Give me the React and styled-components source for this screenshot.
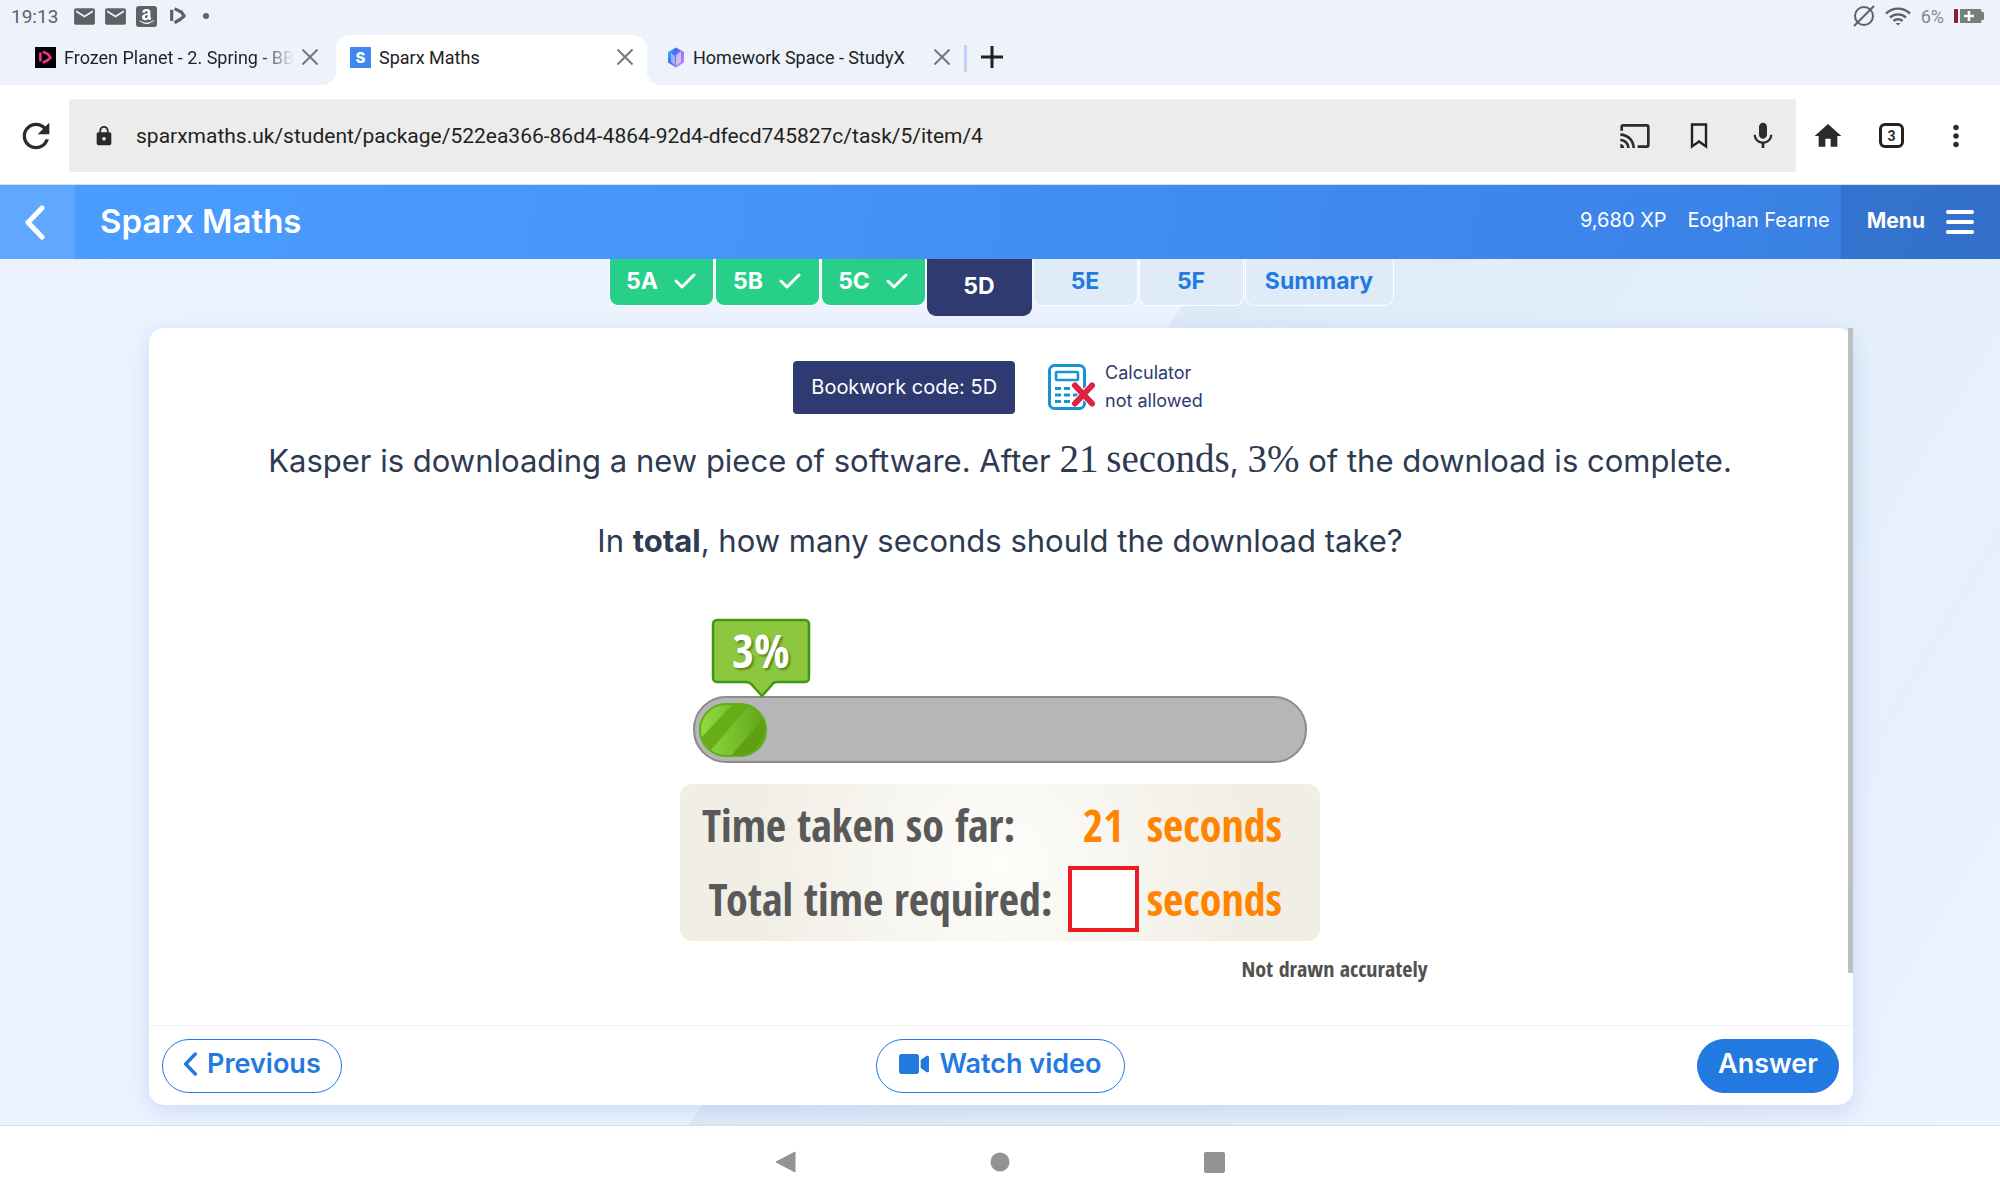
import React from 'react';
import styled, { createGlobalStyle } from 'styled-components';
import { MdEmail, MdRefresh, MdLock, MdCast, MdMic, MdHome, MdMoreVert } from 'react-icons/md';
import { FaAmazon, FaVideo } from 'react-icons/fa';

const GlobalStyle = createGlobalStyle`
  * {
    box-sizing: border-box;
  }
  body {
    margin: 0;
    background: #ffffff;
    font-family: Inter, 'Liberation Sans', sans-serif;
  }
  button, input {
    font-family: inherit;
  }
  button {
    padding: 0;
    border: none;
    background: none;
    color: inherit;
    cursor: pointer;
  }
  svg {
    display: block;
    flex: none;
  }
  p {
    margin: 0;
  }
`;

const Page = styled.div`
  display: flex;
  flex-direction: column;
  min-height: 100vh;
`;

/* ---------- browser ---------- */

const BrowserTop = styled.div`
  background: #eef3fb;
  font-family: Roboto, sans-serif;
`;

const StatusBar = styled.div`
  display: flex;
  align-items: center;
  justify-content: space-between;
  height: 35px;
  padding: 0 16px 3px 11px;
  color: #5f6164;
  font-size: 19px;
`;

const StatusGroup = styled.div`
  display: flex;
  align-items: center;
  gap: ${(props) => props.$gap}px;
`;

const Clock = styled.span`
  margin-right: 8px;
`;

const AppBadge = styled.span`
  display: flex;
  align-items: center;
  justify-content: center;
  width: 21px;
  height: 21px;
  margin: 0 2px;
  border-radius: 3px;
  background: #5f6164;
  color: #ffffff;
`;

const Dot = styled.span`
  width: 6px;
  height: 6px;
  margin-left: 6px;
  border-radius: 50%;
  background: #5f6164;
`;

const Battery = styled.span`
  font-size: 18px;
  color: #85878a;
`;

const TabStrip = styled.div`
  display: flex;
  align-items: stretch;
  height: 50px;
  padding-left: 21px;
`;

const BrowserTab = styled.div`
  position: relative;
  display: flex;
  align-items: center;
  gap: 8px;
  width: 311px;
  margin: ${(props) => (props.$active ? '0 6px 0 4px' : '0')};
  padding: 0 14px 6px;
  border-radius: 14px 14px 0 0;
  background: ${(props) => (props.$active ? '#ffffff' : 'transparent')};
  color: #1f2124;
  font-size: 18px;

  &::before,
  &::after {
    content: '';
    position: absolute;
    bottom: 0;
    display: ${(props) => (props.$active ? 'block' : 'none')};
    width: 14px;
    height: 14px;
  }
  &::before {
    left: -14px;
    background: radial-gradient(circle at 0 0, transparent 14px, #ffffff 14px);
  }
  &::after {
    right: -14px;
    background: radial-gradient(circle at 100% 0, transparent 14px, #ffffff 14px);
  }
`;

const TabTitle = styled.span`
  flex: 1;
  min-width: 0;
  overflow: hidden;
  white-space: nowrap;
  ${(props) => props.$fade && 'mask-image: linear-gradient(to right, #000 85%, transparent);'}
`;

const TabDivider = styled.span`
  align-self: center;
  width: 3px;
  height: 27px;
  margin-bottom: 4px;
  background: #bfd2f6;
`;

const NewTab = styled.button`
  padding: 0 14px 6px;
`;

const AddressRow = styled.div`
  display: flex;
  align-items: center;
  height: 100px;
  padding: 2px 27px 0 16px;
  border-bottom: 1px solid #dddfe2;
  background: #ffffff;
  color: #2b2b2b;
`;

const AddressBox = styled.div`
  display: flex;
  flex: 1;
  align-items: center;
  height: 73px;
  margin: 0 16px 0 13px;
  padding: 0 17px 0 24px;
  border-radius: 3px;
  background: #ececec;
`;

const AddressInput = styled.input`
  flex: 1;
  min-width: 0;
  margin-left: 21px;
  padding: 0;
  border: none;
  outline: none;
  background: none;
  color: #1f1f1f;
  font-family: Roboto, sans-serif;
  font-size: 21px;
`;

const BoxActions = styled.div`
  display: flex;
  align-items: center;
  gap: 32px;
`;

const BoxButton = styled.button`
  display: flex;
  justify-content: center;
  width: 32px;
`;

const ToolActions = styled.div`
  display: flex;
  align-items: center;
  gap: 35px;
`;

const TabCount = styled.button`
  width: 25px;
  height: 25px;
  border: 3px solid #222222;
  border-radius: 6px;
  font: bold 14px Roboto, sans-serif;
`;

/* ---------- site header ---------- */

const Header = styled.header`
  display: flex;
  align-items: stretch;
  height: 74px;
  background: linear-gradient(100deg, #4b9dff 0%, #4797fa 30%, #3d86ec 75%, #397edf 100%);
  color: #ffffff;
`;

const BackButton = styled.button`
  display: flex;
  align-items: center;
  justify-content: center;
  width: 75px;
  padding-right: 5px;
  background: rgba(255, 255, 255, 0.12);
`;

const Brand = styled.a`
  display: flex;
  flex: 1;
  align-items: center;
  padding: 0 0 3px 25px;
  color: #ffffff;
  font-size: 33px;
  font-weight: 600;
  text-decoration: none;
`;

const UserInfo = styled.div`
  display: flex;
  align-items: center;
  gap: 21px;
  padding: 0 11px 4px;
  font-size: 20px;
`;

const MenuButton = styled.button`
  display: flex;
  align-items: center;
  gap: 21px;
  padding: 0 26px;
  background: rgba(20, 50, 110, 0.18);
  font-size: 21px;
  font-weight: 700;
`;

const MenuText = styled.span`
  padding-bottom: 4px;
`;

/* ---------- task ---------- */

const Main = styled.main`
  display: flex;
  flex: 1;
  flex-direction: column;
  padding: 0 147px 20px 149px;
  background: linear-gradient(
    121deg,
    #ecf3fe 0%,
    #ecf3fe 48%,
    #deebf6 48%,
    #e5f0fa 78%,
    #e9effb 88%,
    #edf4ff 100%
  );
`;

const TaskTabs = styled.nav`
  display: flex;
  justify-content: center;
  align-items: flex-start;
  gap: 1px;
  height: 69px;
`;

const tabColors = {
  done: 'background: #28cf88; color: #ffffff; border-color: #ffffff;',
  current: 'background: #2e3a70; color: #ffffff; border-color: #2e3a70;',
  open: 'background: #dfebf7; color: #2279df; border-color: #ffffff;',
};

const TaskTab = styled.button`
  display: flex;
  align-items: center;
  justify-content: center;
  gap: 16px;
  min-width: ${(props) => (props.$wide ? 149 : 105)}px;
  height: ${(props) => (props.$state === 'current' ? 57 : 47)}px;
  padding-bottom: 2px;
  border: 1px solid;
  border-top: none;
  border-radius: 0 0 9px 9px;
  font-size: 23px;
  font-weight: 700;
  ${(props) => tabColors[props.$state]}
`;

const Card = styled.section`
  position: relative;
  display: flex;
  flex: 1;
  flex-direction: column;
  border-radius: 15px;
  background: #ffffff;
  box-shadow: 0 6px 22px rgba(90, 130, 235, 0.22);
`;

const ScrollThumb = styled.div`
  position: absolute;
  top: 0;
  right: 0;
  width: 5px;
  height: 83%;
  background: #bfbfbf;
`;

const Content = styled.div`
  display: flex;
  flex: 1;
  flex-direction: column;
  align-items: center;
  padding: 31px 26px 0 24px;
`;

const InfoRow = styled.div`
  display: flex;
  align-items: center;
  gap: 33px;
  margin-bottom: 24px;
  color: #2e3a70;
`;

const BookworkCode = styled.div`
  padding: 0 18px;
  border-radius: 4px;
  background: #2e3a70;
  color: #ffffff;
  font-size: 20px;
  line-height: 53px;
`;

const CalculatorNote = styled.div`
  display: flex;
  align-items: center;
  gap: 9px;
  padding-right: 4px;
  font-size: 18px;
  line-height: 28px;
`;

const Question = styled.div`
  display: flex;
  flex-direction: column;
  gap: 40px;
  margin-bottom: 57px;
  color: #2d3a52;
  font-size: 31px;
  line-height: 40px;
  text-align: center;
`;

const Maths = styled.span`
  font-family: 'Liberation Serif', serif;
  font-size: 39px;
`;

const Figure = styled.figure`
  display: flex;
  flex-direction: column;
  align-items: center;
  width: 100%;
  max-width: 855px;
  margin: 0;
  font-family: 'Open Sans Condensed', 'Roboto Condensed', sans-serif;
  font-weight: 700;
`;

const BubbleText = styled.text`
  fill: #ffffff;
  font-size: 47px;
  text-anchor: middle;
  text-shadow: 2px 2px 2px rgba(40, 80, 10, 0.5);
`;

const TimePanel = styled.div`
  display: grid;
  grid-template-columns: 1fr 71px auto;
  align-items: center;
  column-gap: 8px;
  row-gap: 3px;
  width: 640px;
  min-height: 157px;
  margin-top: 20px;
  padding: 5px 38px 7px 22px;
  border-radius: 12px;
  background: radial-gradient(circle, #fdfdfa 0%, #f1eee5 75%);
  color: #595959;
  font-size: 44px;
  line-height: 68px;
  white-space: nowrap;
`;

const TimeLabel = styled.label`
  padding-right: ${(props) => (props.$right ? 7 : 0)}px;
  text-align: ${(props) => (props.$right ? 'right' : 'left')};
`;

const TimeValue = styled.span`
  color: #ff8400;
  text-align: center;
`;

const AnswerInput = styled.input`
  width: 71px;
  height: 66px;
  padding: 0 4px;
  border: 4px solid #ed1c24;
  border-radius: 0;
  background: #ffffff;
  font-size: 36px;
  text-align: center;
`;

const Caption = styled.figcaption`
  align-self: flex-end;
  margin-top: 11px;
  color: #51514d;
  font-size: 22px;
  line-height: 32px;
`;

const CardFooter = styled.footer`
  display: grid;
  grid-template-columns: 1fr auto 1fr;
  align-items: center;
  height: 80px;
  padding: 0 14px 0 13px;
  border-top: 1px solid #eaf1fb;
`;

const PillButton = styled.button`
  display: flex;
  align-items: center;
  gap: ${(props) => props.$gap || 0}px;
  justify-self: ${(props) => props.$align || 'center'};
  height: 54px;
  padding: 0 ${(props) => props.$pad}px 4px;
  border: 1px solid #2279df;
  border-radius: 27px;
  background: ${(props) => (props.$primary ? '#2279df' : '#ffffff')};
  color: ${(props) => (props.$primary ? '#ffffff' : '#2279df')};
  font-size: 27px;
  font-weight: 600;
`;

/* ---------- system navigation ---------- */

const SystemNav = styled.nav`
  display: flex;
  align-items: center;
  justify-content: center;
  gap: 194px;
  height: 75px;
  padding-bottom: 2px;
  border-top: 1px solid #dcdfe4;
  background: #ffffff;
`;

const taskTabs = [
  { name: '5A', state: 'done' },
  { name: '5B', state: 'done' },
  { name: '5C', state: 'done' },
  { name: '5D', state: 'current' },
  { name: '5E', state: 'open' },
  { name: '5F', state: 'open' },
  { name: 'Summary', state: 'open', wide: true },
];

function CloseIcon() {
  return (
    <svg width="16" height="16" viewBox="0 0 16 16" stroke="#77797c" strokeWidth="2">
      <path d="M0.5 0.5l15 15M15.5 0.5l-15 15" />
    </svg>
  );
}

function CloseTab({ title }) {
  return (
    <button aria-label={`Close ${title}`}>
      <CloseIcon />
    </button>
  );
}

// Broken "D" outline used by the iPlayer notification and favicon
function PlayerMark({ size, color, back }) {
  return (
    <svg width={size} height={size} viewBox="0 0 21 21">
      {back && <rect width="21" height="21" fill={back} />}
      <g fill="none" stroke={color} strokeWidth="2.6">
        <path d="M5.4 5.5v9" />
        <path d="M7.8 4.6l5 2.6" />
        <path d="M12.6 6.4l3.2 4.6" />
        <path d="M16 10.2l-5 4.2" />
        <path d="M11.5 13.4l-3.700 2.600" />
      </g>
    </svg>
  );
}

function SparxIcon() {
  return (
    <svg width="21" height="21" viewBox="0 0 21 21">
      <rect width="21" height="21" fill="#3f88f0" />
      <text x="10.5" y="16" fill="#fff" fontFamily="Inter" fontWeight="800" fontSize="15" textAnchor="middle">S</text>
    </svg>
  );
}

function StudyIcon() {
  return (
    <svg width="18" height="21" viewBox="0 0 18 21">
      <defs>
        <linearGradient id="study" x1="0" y1="0" x2="1" y2="0.6">
          <stop offset="0" stopColor="#35e0dd" />
          <stop offset="0.4" stopColor="#3f6cf5" />
          <stop offset="1" stopColor="#c97bf5" />
        </linearGradient>
      </defs>
      <path d="M9 0.5l8 4.5v10.5l-8 5-8-5V5z" fill="url(#study)" />
      <path d="M4 6l4 3v9l-4-3z" fill="#ffffff" opacity="0.45" />
      <path d="M9 8l5-4v11l-5 4z" fill="#ffffff" opacity="0.55" />
    </svg>
  );
}

function MuteIcon() {
  return (
    <svg width="22" height="22" viewBox="0 0 22 22" fill="none" stroke="#5f6164" strokeWidth="2">
      <circle cx="11" cy="11" r="9" />
      <path d="M1 21L21 1" />
    </svg>
  );
}

function WifiIcon() {
  return (
    <svg width="26" height="19" viewBox="0 0 26 19" fill="none" stroke="#5f6164" strokeWidth="2.4">
      <path d="M1 6.5C8 0 18 0 25 6.5" />
      <path d="M5 10.5c4.5-4.2 11.5-4.2 16 0" />
      <path d="M8.5 14c2.5-2.3 6.5-2.3 9 0" />
      <path d="M10.5 16h5L13 18.5z" fill="#5f6164" stroke="none" />
    </svg>
  );
}

function BatteryIcon() {
  return (
    <svg width="30" height="14" viewBox="0 0 30 14">
      <rect width="4" height="14" rx="1" fill="#8c1d2c" />
      <path d="M6 0h20a1.5 1.5 0 0 1 1.5 1.5V3H29a1 1 0 0 1 1 1v6a1 1 0 0 1-1 1h-1.5v1.5A1.5 1.5 0 0 1 26 14H6z" fill="#7b7c7f" />
      <path d="M15 2v10M10 7h10" stroke="#fff" strokeWidth="2.5" />
    </svg>
  );
}

function BookmarkIcon() {
  return (
    <svg width="18" height="26" viewBox="0 0 18 26" fill="none" stroke="#222" strokeWidth="2.4">
      <path d="M2 1.5h14v22l-7-5-7 5z" />
    </svg>
  );
}

function PlusIcon() {
  return (
    <svg width="22" height="22" viewBox="0 0 22 22" stroke="#222" strokeWidth="3">
      <path d="M11 0v22M0 11h22" />
    </svg>
  );
}

function Chevron({ width, height, stroke }) {
  return (
    <svg width={width} height={height} viewBox="0 0 20 35" fill="none" stroke="currentColor" strokeWidth={stroke} strokeLinecap="round" strokeLinejoin="round">
      <path d="M17 3L3 17.5l14 14.5" />
    </svg>
  );
}

function CheckIcon() {
  return (
    <svg width="22" height="16" viewBox="0 0 22 16" fill="none" stroke="#fff" strokeWidth="3" strokeLinecap="round" strokeLinejoin="round">
      <path d="M2 8l6 6L20 2" />
    </svg>
  );
}

function BurgerIcon() {
  return (
    <svg width="28" height="24" viewBox="0 0 28 24" stroke="#fff" strokeWidth="4" strokeLinecap="round">
      <path d="M2 2h24M2 12h24M2 22h24" />
    </svg>
  );
}

function CalculatorIcon() {
  return (
    <svg width="48" height="46" viewBox="0 0 48 46" fill="none">
      <rect x="1.5" y="1.5" width="35" height="43" rx="5" stroke="#1793d1" strokeWidth="3" />
      <rect x="8" y="8" width="22" height="8" rx="1" stroke="#1793d1" strokeWidth="2.6" />
      <path d="M7 24.5h6M16 24.5h6M25 24.5h6M7 31h6M16 31h6M25 31h6M7 37.5h6M16 37.5h6M25 37.5h6" stroke="#1793d1" strokeWidth="3" />
      <path d="M27 21.5l17 18M44 21.5l-17 18" stroke="#fff" strokeWidth="8" />
      <path d="M27 21.5l17 18M44 21.5l-17 18" stroke="#dc2343" strokeWidth="6" strokeLinecap="round" />
    </svg>
  );
}

function ProgressDrawing() {
  return (
    <svg width="614" height="146" viewBox="0 0 614 146" role="img" aria-label="Download progress bar">
      <defs>
        <linearGradient id="fill" x1="0" y1="0" x2="1" y2="0">
          <stop offset="0" stopColor="#8fdc40" />
          <stop offset="1" stopColor="#62a418" />
        </linearGradient>
        <clipPath id="pill">
          <rect x="7" y="86" width="66" height="52" rx="26" />
        </clipPath>
      </defs>
      <rect x="1" y="79" width="612" height="65" rx="32" fill="#b6b6b6" stroke="#8b8b8b" strokeWidth="2" />
      <rect x="7" y="86" width="66" height="52" rx="26" fill="url(#fill)" />
      <g clipPath="url(#pill)" fill="#66ad18">
        <path d="M41 85h17L18 132 7 121z" />
        <path d="M37 139L72 98l4 11-18 30z" fill="#5f9f12" />
      </g>
      <rect x="7" y="86" width="66" height="52" rx="26" fill="none" stroke="#5fae1c" strokeWidth="2" />
      <path
        d="M24 2h88a4 4 0 0 1 4 4v54a4 4 0 0 1-4 4H85c-4 0-5 1-7 4l-9 10-9-10c-2-3-4-4-8-4H24a4 4 0 0 1-4-4V6a4 4 0 0 1 4-4z"
        fill="#8dc63f"
        stroke="#3f9a10"
        strokeWidth="2.5"
      />
      <BubbleText x="68" y="50">3%</BubbleText>
    </svg>
  );
}

function Browser() {
  return (
    <BrowserTop>
      <StatusBar>
        <StatusGroup $gap={6}>
          <Clock>19:13</Clock>
          <MdEmail size={25} />
          <MdEmail size={25} />
          <AppBadge>
            <FaAmazon size={17} />
          </AppBadge>
          <PlayerMark size={26} color="#5f6164" />
          <Dot />
        </StatusGroup>
        <StatusGroup $gap={10}>
          <MuteIcon />
          <WifiIcon />
          <Battery>6%</Battery>
          <BatteryIcon />
        </StatusGroup>
      </StatusBar>
      <TabStrip>
        <BrowserTab>
          <PlayerMark size={21} color="#f5308f" back="#000000" />
          <TabTitle $fade>Frozen Planet - 2. Spring - BBC</TabTitle>
          <CloseTab title="Frozen Planet" />
        </BrowserTab>
        <BrowserTab $active>
          <SparxIcon />
          <TabTitle>Sparx Maths</TabTitle>
          <CloseTab title="Sparx Maths" />
        </BrowserTab>
        <BrowserTab>
          <StudyIcon />
          <TabTitle>Homework Space - StudyX</TabTitle>
          <CloseTab title="Homework Space" />
        </BrowserTab>
        <TabDivider />
        <NewTab aria-label="New tab">
          <PlusIcon />
        </NewTab>
      </TabStrip>
      <AddressRow>
        <button aria-label="Reload">
          <MdRefresh size={40} />
        </button>
        <AddressBox>
          <MdLock size={22} />
          <AddressInput
            aria-label="Address"
            defaultValue="sparxmaths.uk/student/package/522ea366-86d4-4864-92d4-dfecd745827c/task/5/item/4"
          />
          <BoxActions>
            <BoxButton aria-label="Cast">
              <MdCast size={32} />
            </BoxButton>
            <BoxButton aria-label="Bookmark">
              <BookmarkIcon />
            </BoxButton>
            <BoxButton aria-label="Voice search">
              <MdMic size={32} />
            </BoxButton>
          </BoxActions>
        </AddressBox>
        <ToolActions>
          <button aria-label="Home">
            <MdHome size={32} />
          </button>
          <TabCount aria-label="3 open tabs">3</TabCount>
          <button aria-label="More">
            <MdMoreVert size={34} />
          </button>
        </ToolActions>
      </AddressRow>
    </BrowserTop>
  );
}

function App() {
  return (
    <Page>
      <GlobalStyle />
      <Browser />
      <Header>
        <BackButton aria-label="Back">
          <Chevron width={20} height={35} stroke={5} />
        </BackButton>
        <Brand href="#home">Sparx Maths</Brand>
        <UserInfo>
          <span>9,680 XP</span>
          <span>Eoghan Fearne</span>
        </UserInfo>
        <MenuButton>
          <MenuText>Menu</MenuText>
          <BurgerIcon />
        </MenuButton>
      </Header>
      <Main>
        <TaskTabs>
          {taskTabs.map((tab) => (
            <TaskTab key={tab.name} $state={tab.state} $wide={tab.wide}>
              {tab.name}
              {tab.state === 'done' && <CheckIcon />}
            </TaskTab>
          ))}
        </TaskTabs>
        <Card>
          <Content>
            <InfoRow>
              <BookworkCode>Bookwork code: 5D</BookworkCode>
              <CalculatorNote>
                <CalculatorIcon />
                <span>
                  Calculator
                  <br />
                  not allowed
                </span>
              </CalculatorNote>
            </InfoRow>
            <Question>
              <p>
                Kasper is downloading a new piece of software. After <Maths>21&#8201;seconds</Maths>,{' '}
                <Maths>3%</Maths> of the download is complete.
              </p>
              <p>
                In <b>total</b>, how many seconds should the download take?
              </p>
            </Question>
            <Figure>
              <ProgressDrawing />
              <TimePanel>
                <TimeLabel as="span">Time taken so far:</TimeLabel>
                <TimeValue>21</TimeValue>
                <TimeValue>seconds</TimeValue>
                <TimeLabel htmlFor="total-time" $right>
                  Total time required:
                </TimeLabel>
                <AnswerInput id="total-time" />
                <TimeValue>seconds</TimeValue>
              </TimePanel>
              <Caption>Not drawn accurately</Caption>
            </Figure>
          </Content>
          <CardFooter>
            <PillButton $align="start" $gap={9} $pad={20}>
              <Chevron width={15} height={24} stroke={5} />
              Previous
            </PillButton>
            <PillButton $gap={10} $pad={22}>
              <FaVideo size={30} />
              Watch video
            </PillButton>
            <PillButton $align="end" $pad={20} $primary>
              Answer
            </PillButton>
          </CardFooter>
          <ScrollThumb />
        </Card>
      </Main>
      <SystemNav>
        <button aria-label="Back">
          <svg width="21" height="22" viewBox="0 0 21 22">
            <path d="M20 1v20L1 11z" fill="#939393" stroke="#939393" strokeLinejoin="round" />
          </svg>
        </button>
        <button aria-label="Home">
          <svg width="20" height="20" viewBox="0 0 20 20">
            <circle cx="10" cy="10" r="9.5" fill="#939393" />
          </svg>
        </button>
        <button aria-label="Recent apps">
          <svg width="21" height="21" viewBox="0 0 21 21">
            <rect width="21" height="21" rx="2" fill="#939393" />
          </svg>
        </button>
      </SystemNav>
    </Page>
  );
}

export default App;
